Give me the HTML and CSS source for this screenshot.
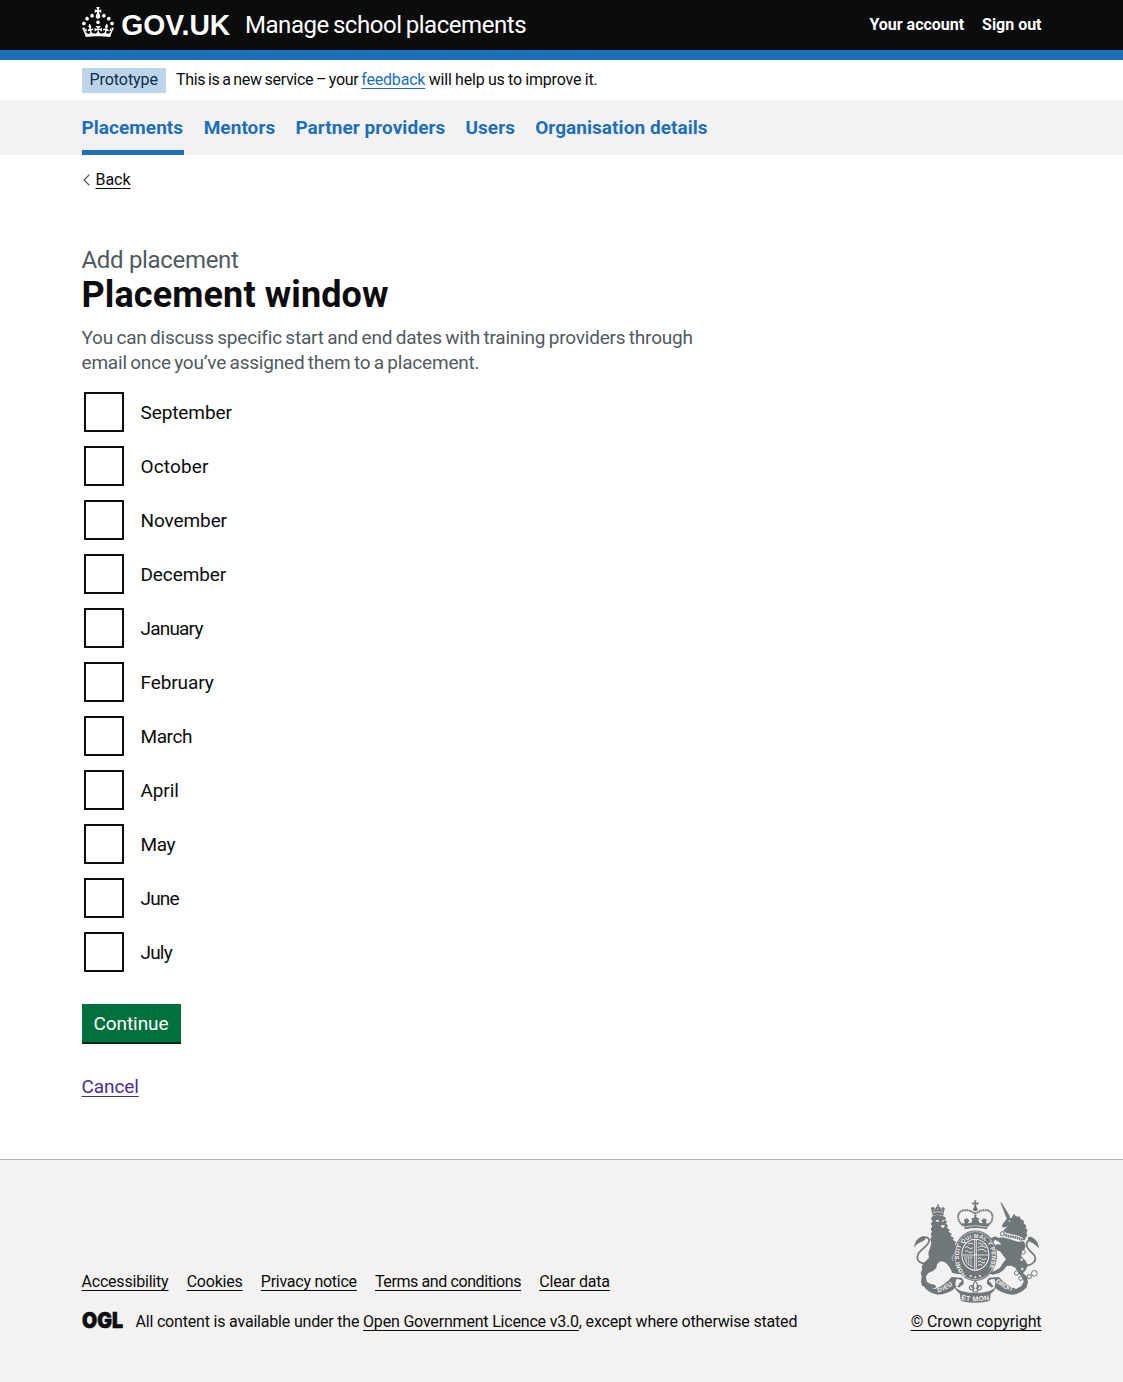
FILE: index.html
```html
<!DOCTYPE html>
<html lang="en">
<head>
<meta charset="utf-8">
<title>Placement window - Manage school placements</title>
<link rel="stylesheet" href="styles.css">
</head>
<body>
<header class="header">
  <div class="container header-row">
    <a class="logo" href="#" aria-label="GOV.UK">
      <svg width="150" height="36" viewBox="0 0 150 36" fill="currentColor">
        <path d="M22.6 10.4c-1 .4-2-.1-2.4-1-.4-.9.1-2 1-2.4.9-.4 2 .1 2.4 1s-.1 2-1 2.4m-5.9 6.7c-.9.4-2-.1-2.4-1-.4-.9.1-2 1-2.4.9-.4 2 .1 2.4 1s-.1 2-1 2.4m10.8-3.7c-1 .4-2-.1-2.4-1-.4-.9.1-2 1-2.4.9-.4 2 .1 2.4 1s0 2-1 2.4m3.3 4.8c-1 .4-2-.1-2.4-1-.4-.9.1-2 1-2.4.9-.4 2 .1 2.4 1s-.1 2-1 2.4M17 4.7l2.3 1.2V2.5l-2.3.7-.2-.2.9-3h-3.4l.9 3-.2.2c-.1.1-2.3-.7-2.3-.7v3.4L15 4.7c.1.1.1.2.2.2l-1.3 4c-.1.2-.1.4-.1.6 0 1.1.8 2 1.9 2.2h.7c1-.2 1.9-1.1 1.9-2.1 0-.2 0-.4-.1-.6l-1.3-4c-.1-.2 0-.2.1-.3m-7.6 5.7c.9.4 2-.1 2.4-1 .4-.9-.1-2-1-2.4-.9-.4-2 .1-2.4 1s0 2 1 2.4m-5 3c.9.4 2-.1 2.4-1 .4-.9-.1-2-1-2.4-.9-.4-2 .1-2.4 1s.1 2 1 2.4m-3.2 4.8c.9.4 2-.1 2.4-1 .4-.9-.1-2-1-2.4-.9-.4-2 .1-2.4 1s0 2 1 2.4m14.8 11c4.4 0 8.6.3 12.3.8 1.1-4.5 2.4-7 3.7-8.8l-2.5-.9c.2 1.3.3 1.9 0 2.7-.4-.4-.8-1.1-1.1-2.3l-1.2 4c.7-.5 1.3-.8 2-.9-1.1 2.5-2.6 3.1-3.5 3-1.1-.2-1.7-1.2-1.5-2.1.3-1.2 1.5-1.5 2.1-.1 1.1-2.3-.8-3-2-2.3 1.9-1.9 2.1-3.5.6-5.6-2.1 1.6-2.1 3.2-1.2 5.5-1.2-1.4-3.2-.6-2.5 1.6.9-1.4 2.1-.5 1.9.8-.2 1.1-1.7 2.1-3.5 1.9-2.7-.2-2.9-2.1-2.9-3.6.7-.1 1.9.5 2.9 1.9l.4-4.3c-1.1 1.1-2.1 1.4-3.2 1.4.4-1.2 2.1-3 2.1-3h-5.4s1.7 1.9 2.1 3c-1.1 0-2.1-.2-3.2-1.4l.4 4.3c1-1.4 2.2-2 2.9-1.9-.1 1.5-.2 3.4-2.9 3.6-1.9.2-3.4-.8-3.5-1.9-.2-1.3 1-2.2 1.9-.8.7-2.3-1.2-3-2.5-1.6.9-2.2.9-3.9-1.2-5.5-1.5 2-1.3 3.7.6 5.6-1.2-.7-3.1 0-2 2.3.6-1.4 1.8-1.1 2.1.1.2.9-.3 1.9-1.5 2.1-.9.2-2.4-.5-3.5-3 .6 0 1.2.3 2 .9l-1.2-4c-.3 1.1-.7 1.9-1.1 2.3-.3-.8-.2-1.4 0-2.7l-2.9.9C1.3 23 2.6 25.5 3.7 30c3.7-.5 7.9-.8 12.3-.8"/>
        <text class="logo-word" x="39.3" y="27.7" textLength="109" lengthAdjust="spacingAndGlyphs">GOV.UK</text>
      </svg>
    </a>
    <a class="service-name" href="#">Manage school placements</a>
    <nav class="account-links"><a href="#">Your account</a><a href="#">Sign out</a></nav>
  </div>
</header>

<div class="container phase-banner">
  <strong class="tag">Prototype</strong>
  <span class="phase-text"><span class="phase-lead">This is a new service – your </span><a class="link" href="#">feedback</a> will help us to improve it.</span>
</div>

<nav class="primary-nav">
  <ul class="container nav-list">
    <li><a class="nav-link nav-link-current" href="#">Placements</a></li>
    <li><a class="nav-link" href="#">Mentors</a></li>
    <li><a class="nav-link" href="#">Partner providers</a></li>
    <li><a class="nav-link" href="#">Users</a></li>
    <li><a class="nav-link" href="#">Organisation details</a></li>
  </ul>
</nav>

<div class="container main-area">
  <a class="back" href="#"><svg width="8" height="12" viewBox="0 0 8 12"><path d="M7.3.8 2 6l5.3 5.2" fill="none" stroke="#505a5f" stroke-width="1.2"/></svg><span class="back-text">Back</span></a>
  <main>
    <h1 class="heading"><span class="caption">Add placement</span>Placement window</h1>
    <p class="hint">You can discuss specific start and end dates with training providers through<br>email once you’ve assigned them to a placement.</p>
    <form>
      <div class="checkboxes">
        <label class="option"><input type="checkbox"><span>September</span></label>
        <label class="option"><input type="checkbox"><span class="wide">October</span></label>
        <label class="option"><input type="checkbox"><span>November</span></label>
        <label class="option"><input type="checkbox"><span>December</span></label>
        <label class="option"><input type="checkbox"><span class="narrow">January</span></label>
        <label class="option"><input type="checkbox"><span>February</span></label>
        <label class="option"><input type="checkbox"><span class="snug">March</span></label>
        <label class="option"><input type="checkbox"><span>April</span></label>
        <label class="option"><input type="checkbox"><span class="snug">May</span></label>
        <label class="option"><input type="checkbox"><span class="narrow">June</span></label>
        <label class="option"><input type="checkbox"><span class="narrow">July</span></label>
      </div>
      <button class="button" type="button">Continue</button>
    </form>
    <a class="cancel" href="#">Cancel</a>
  </main>
</div>

<footer class="footer">
  <div class="container footer-row">
    <div class="footer-main">
      <ul class="footer-links">
        <li><a href="#">Accessibility</a></li>
        <li><a href="#">Cookies</a></li>
        <li><a class="tight" href="#">Privacy notice</a></li>
        <li><a class="tighter" href="#">Terms and conditions</a></li>
        <li><a href="#">Clear data</a></li>
      </ul>
      <div class="licence">
        <svg class="ogl" width="42" height="24" viewBox="0 0 42 24" aria-label="OGL"><text x="0" y="16" textLength="41" lengthAdjust="spacingAndGlyphs">OGL</text></svg>
        <span class="licence-text">All content is available under the <a href="#">Open Government Licence v3.0</a>, except where otherwise stated</span>
      </div>
    </div>
    <a class="copyright" href="#">
      <svg class="crest" width="126" height="103" viewBox="41 29 378 309" fill="#6f777b">
        <!-- lion -->
        <g>
          <path d="M97 76L93 59Q90 50 97 50Q103 50 105 57Q106 48 113 48Q120 48 121 57Q124 49 130 51Q136 54 131 62L129 76Q113 71 97 76Z"/>
          <circle cx="113" cy="45" r="3"/>
          <path d="M97 67Q113 61 129 67M101 57v5M112 54v5M125 57v5" fill="none" stroke="#f3f2f1" stroke-width="2"/>
          <path d="M96 78Q114 70 132 79L138 84L133 88L141 94L136 99L143 107L139 112L149 119L144 124L155 131L150 136L161 143L157 148L168 156L163 162L172 170L165 177L171 187L163 189L160 202L165 213L164 225L173 236L188 238L193 246L186 252L170 251L155 247L151 236L143 224L133 215L120 213L110 222L108 233L99 241L84 248L77 258L79 274L91 281L104 283L108 291L96 295L82 294L75 290L65 286L62 274L64 256L61 248L66 236L64 228L74 214L86 202L84 187L90 170L93 155L89 148L94 138L91 132L95 124L91 116L96 108L91 100L97 93L92 86Z"/>
          <path d="M78 219C56 221 46 208 54 190C64 175 90 163 86 148C83 137 71 141 69 147" fill="none" stroke="#6f777b" stroke-width="5"/>
          <path d="M42 172C42 154 52 142 69 137C78 138 78 144 72 150C62 158 51 156 42 172Z"/>
          <path d="M105 91l7-3 6 4-7 3zM124 91l9-3-4 7zM121 105l13-1-4 9-7-2z" fill="#f3f2f1"/>
          <path d="M161 190Q150 204 160 212" fill="none" stroke="#f3f2f1" stroke-width="1.5"/>
        </g>
        <!-- unicorn -->
        <g>
          <path d="M300 36L304 37L330 80L320 87Z"/>
          <path d="M310 97L322 82L334 83L340 70L347 78L359 79L361 86L371 92L370 99L378 106L376 113L382 120L378 127L381 137L375 142L374 150L350 146L315 130L307 123L319 111L326 108L316 110L307 112L305 105Z"/>
          <path d="M306 141L327 146L352 154L371 153L376 166L372 178L363 190L364 200L376 211L382 224L377 238L368 249L379 258L383 276L378 292L361 303L350 302L351 294L363 287L370 275L366 259L352 247L346 233L333 226L319 227L310 239L297 248L277 253L268 250L270 245L284 241L299 232L306 220L317 207L309 196L300 184L285 176L282 167L292 161L303 164L296 154L284 148L279 155L284 166L278 170L272 161L273 143L284 138L296 143Z"/>
          <path d="M303 125Q318 137 333 138T366 148" fill="none" stroke="#f3f2f1" stroke-width="12"/>
          <path d="M304 126Q318 138 333 139T366 149" fill="none" stroke="#6f777b" stroke-width="8" stroke-dasharray="5 2"/>
          <circle cx="327" cy="92" r="2.5" fill="#f3f2f1"/>
          <path d="M376 225C396 226 410 211 403 197C396 184 376 178 379 160C382 146 391 149 395 155" fill="none" stroke="#6f777b" stroke-width="5"/>
          <path d="M416 175C416 159 407 146 392 139C382 138 379 146 386 151C396 159 408 162 416 175Z"/>
          <g fill="#f3f2f1" stroke="#6f777b" stroke-width="3">
            <circle cx="306" cy="130" r="6"/><circle cx="369" cy="185" r="6"/><circle cx="364" cy="208" r="5"/><circle cx="349" cy="248" r="6.5"/><circle cx="361" cy="264" r="6"/><circle cx="366" cy="236" r="5"/><circle cx="387" cy="259" r="6.5"/><circle cx="402" cy="249" r="8.5"/>
          </g>
        </g>
        <!-- shield and garter -->
        <ellipse cx="225" cy="196" rx="65" ry="76"/>
        <ellipse cx="225" cy="196" rx="61" ry="72" fill="none" stroke="#f3f2f1" stroke-width="1.5"/>
        <ellipse cx="225" cy="193" rx="42" ry="48" fill="#f3f2f1"/>
        <path id="garter" d="M199 252C165 230 164 145 225 143S285 230 251 252" fill="none"/>
        <text class="crest-text garter-text"><textPath href="#garter" textLength="262">HONI SOIT QUI MAL Y PENSE</textPath></text>
        <ellipse cx="225" cy="193" rx="39" ry="45"/>
        <g stroke="#f3f2f1" fill="none" stroke-width="3">
          <path d="M223 148v90M228 148v90M186 194h78" stroke-width="2.5"/>
          <path d="M195 172q5-7 10 0t13 0M194 184q5-7 10 0t13 0M203 161q5-6 15 0M233 161q5-7 10 0t5 0M233 181q8-10 26 3M233 172q8-10 24 0" stroke-width="3"/>
          <path d="M193 201q4 23 24 28M198 202v15M205 200v24M212 200v28M191 200h26" stroke-width="2"/>
          <path d="M233 205q5-7 10 0t14 0M233 215q5-7 10 0t11 0M233 225q6-5 13 0" stroke-width="3"/>
        </g>
        <path d="M189 244q36 27 72 0l-3 9q-33 23-66 0z"/>
        <circle cx="211" cy="257" r="3" fill="#f3f2f1"/><circle cx="225" cy="261" r="3" fill="#f3f2f1"/><circle cx="239" cy="257" r="3" fill="#f3f2f1"/>
        <!-- crown -->
        <path d="M176 55h98v45l-13 20h-72l-13-20z" fill="#f3f2f1"/>
        <path d="M222 30h6l-1 7 7-2v8l-7-1 2 9q6 6 0 11h-8q-6-5 0-11l2-9-7 1v-8l7 2z"/>
        <path d="M187 105C168 91 169 63 190 60q19-3 31 9M263 105c19-14 18-42-3-45q-19-3-31 9" fill="none" stroke="#6f777b" stroke-width="6" stroke-dasharray="5 1.5"/>
        <path d="M225 66v22" stroke="#6f777b" stroke-width="7" stroke-dasharray="5 1.5"/>
        <path d="M185 97l8 3-2-12 8-4 8 6-4 9 10-2 3-8-4-6 7 1 6-8 6 8 7-1-4 6 3 8 10 2-4-9 8-6 8 4-2 12 8-3-5 20q-33-8-66 0z"/>
        <path d="M190 110q35-8 70 0" fill="none" stroke="#f3f2f1" stroke-width="2"/>
        <!-- motto ribbon -->
        <path d="M70 288L103 296Q134 285 154 260L184 262Q193 270 189 282L177 291Q173 292 170 288Q148 312 112 313Q84 309 70 288ZM380 288L347 296Q316 285 296 260L266 262Q257 270 261 282L273 291Q277 292 280 288Q302 312 338 313Q366 309 380 288Z"/>
        <path d="M168 266q17 0 16 8-6 0-9 9-3 6-8 6-4-8 1-23zM282 266q-17 0-16 8 6 0 9 9 3 6 8 6 4-8-1-23z" fill="#f3f2f1"/>
        <path d="M162 288q6 8 20 14 43 12 86 0 14-6 20-14-3 13-17 22l-2 20q-5 4-14 5-30 5-60 0-9-1-14-5l-2-20q-14-9-17-22z"/>
        <path id="dieu" d="M113 306Q142 300 163 277" fill="none"/>
        <path id="mon" d="M182 328Q225 338 268 328" fill="none"/>
        <path id="droit" d="M285 274Q309 299 343 303" fill="none"/>
        <text class="crest-text"><textPath href="#dieu" textLength="51">DIEU</textPath></text>
        <text class="crest-text mon"><textPath href="#mon" textLength="86">ET MON</textPath></text>
        <text class="crest-text"><textPath href="#droit" textLength="60">DROIT</textPath></text>
        <path d="M225 272q-10 12-4 22-8 0-6-8-9-1-8 7 2 8 12 5v7h12v-7q10 3 12-5 2-8-8-7 2 8-6 8 6-10-4-22z" fill="#f3f2f1" stroke="#6f777b" stroke-width="3.5"/>
      </svg>
      <span class="copyright-text">© Crown copyright</span>
    </a>
  </div>
</footer>
</body>
</html>
```
FILE: styles.css
```css
* { box-sizing: border-box; }
body {
  margin: 0;
  background: #fff;
  color: #0b0c0c;
  font: 16px/20px Roboto, "Liberation Sans", sans-serif;
  letter-spacing: -0.2px;
}
ul { list-style: none; margin: 0; padding: 0; }
a { color: inherit; text-decoration: underline; text-decoration-thickness: 1px; text-underline-offset: 2.5px; text-decoration-skip-ink: none; }
svg { display: block; flex: none; overflow: visible; }
.container { width: 960px; margin: 0 auto; }

.header { height: 60px; background: #0b0c0c; border-bottom: 10px solid #1d70b8; color: #fff; }
.header-row { display: flex; height: 50px; }
.header a { text-decoration: none; }
.logo { width: 163.5px; padding-top: 7px; }
.logo-word { font: 700 29px "Liberation Sans", sans-serif; letter-spacing: 0; }
.service-name { font-size: 24px; line-height: 50px; letter-spacing: -0.45px; word-spacing: -1.4px; }
.account-links { display: flex; gap: 18px; margin-left: auto; font-weight: 700; line-height: 49px; letter-spacing: -0.02px; }

.phase-banner { display: flex; gap: 10px; height: 40px; padding-top: 8px; }
.tag { height: 25px; padding: 0 8px; background: #bbd4ea; color: #0c2d4a; font-weight: 400; line-height: 24px; letter-spacing: -0.06px; }
.phase-text { line-height: 24px; letter-spacing: -0.18px; word-spacing: -0.4px; }
.phase-lead { letter-spacing: -0.3px; word-spacing: -0.95px; }
.link { color: #1d70b8; }

.primary-nav { height: 55px; background: #f3f2f1; }
.nav-list { display: flex; gap: 20.2px; }
.nav-link { display: block; height: 55px; color: #1d70b8; font-size: 19px; font-weight: 700; line-height: 55px; letter-spacing: 0.05px; text-decoration: none; }
.nav-link-current { width: 102px; border-bottom: 5px solid #1d70b8; }

.main-area { height: 1004px; padding-top: 15px; }
.back { display: flex; align-items: center; gap: 6px; width: max-content; height: 20px; text-decoration: none; }
.back-text { text-decoration: underline 1px; text-underline-offset: 2.5px; letter-spacing: -0.04px; }
.heading { margin: 57px 0 0; font-size: 36px; line-height: 40px; letter-spacing: 0.11px; }
.caption { display: block; margin-bottom: 1px; color: #505a5f; font-size: 24px; font-weight: 400; line-height: 27px; letter-spacing: -0.32px; }
.hint { margin: 10px 0 17px; color: #505a5f; font-size: 19px; line-height: 25px; letter-spacing: -0.2px; word-spacing: -1.1px; white-space: nowrap; }
.checkboxes { display: grid; gap: 14px; padding-left: 2px; }
.option { display: flex; align-items: center; gap: 17px; height: 40px; font-size: 19px; letter-spacing: -0.1px; }
.option span { padding-top: 2px; }
.option input { appearance: none; width: 40px; height: 40px; margin: 0; border: 2px solid #0b0c0c; background: #fff; }
.wide { letter-spacing: 0.15px; }
.snug { letter-spacing: -0.4px; }
.narrow { letter-spacing: -0.8px; }
.button { display: block; width: 99px; height: 38px; margin-top: 32px; padding: 0; border: 0; background: #00703c; box-shadow: 0 2px 0 #002d18; color: #fff; font: 19px/40px Roboto, "Liberation Sans", sans-serif; letter-spacing: -0.07px; }
.cancel { display: inline-block; margin-top: 32px; color: #4c2c92; font-size: 19px; line-height: 25px; letter-spacing: -0.08px; }

.footer { height: 223px; border-top: 1px solid #b1b4b6; background: #f3f2f1; }
.footer-row { display: flex; justify-content: space-between; padding-top: 40px; }
.footer-main { padding-top: 72px; }
.footer-links { display: flex; gap: 18.2px; }
.tight { letter-spacing: -0.26px; }
.tighter { letter-spacing: -0.4px; }
.licence { display: flex; gap: 12px; height: 20px; margin-top: 20px; }
.licence-text { letter-spacing: -0.19px; }
.ogl { fill: #0b0c0c; stroke: #0b0c0c; stroke-width: 0.6; font: 900 21px Inter, sans-serif; letter-spacing: 0; }
.copyright { display: flex; flex-direction: column; align-items: flex-end; text-decoration: none; }
.crest { margin: 0 2px 9px 0; }
.crest-text { fill: #f3f2f1; font: 700 19px "Liberation Sans", sans-serif; letter-spacing: 0; }
.garter-text { font-size: 17px; }
.mon { font-size: 21px; }
.copyright-text { letter-spacing: -0.1px; text-decoration: underline 1px; text-underline-offset: 2.5px; }
```
